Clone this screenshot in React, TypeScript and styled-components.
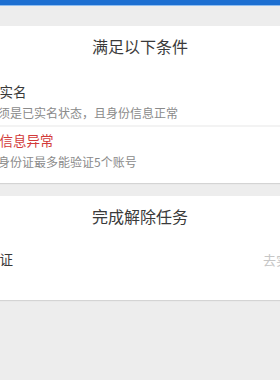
import * as React from "react"
import styled, {createGlobalStyle} from "styled-components"

const GlobalStyle = createGlobalStyle`
    html, body {
        margin: 0;
        padding: 0;
        background: #ededed;
        overflow: hidden;
        font-family: "Noto Sans CJK SC", "Noto Sans", sans-serif;
    }
`

const conditions = [
    {title: "已实名", desc: "必须是已实名状态，且身份信息正常", warn: false},
    {title: "无信息异常", desc: "同身份证最多能验证5个账号", warn: true},
]

export default function App() {
    return (
        <Viewport>
            <GlobalStyle />
            <Page>
                <TopBar />
                <Card>
                    <CardTitle>满足以下条件</CardTitle>
                    <CondRow $top={18} $bottom={5}>
                        <CondTitle>{conditions[0].title}</CondTitle>
                        <CondDesc>{conditions[0].desc}</CondDesc>
                    </CondRow>
                    <Divider />
                    <CondRow $top={6} $bottom={14}>
                        <CondTitle $warn>{conditions[1].title}</CondTitle>
                        <CondDesc>{conditions[1].desc}</CondDesc>
                    </CondRow>
                </Card>
                <Card>
                    <CardTitle>完成解除任务</CardTitle>
                    <TaskRow>
                        <TaskName>验证</TaskName>
                        <TaskAction>去实名</TaskAction>
                    </TaskRow>
                </Card>
            </Page>
        </Viewport>
    )
}

const Viewport = styled("div")`
    width: 280px;
    height: 380px;
    overflow: hidden;
    background: #ededed;
`
const Page = styled("div")`
    width: 340px;
    margin-left: -30px;
    display: flex;
    flex-direction: column;
    gap: 13px;
`
const TopBar = styled("div")`
    height: 5px;
    background: #1d6fd1;
    border-bottom: 1px solid #8fbdef;
    margin-bottom: 7px;
`
const Card = styled("div")`
    background: #fff;
    display: flex;
    flex-direction: column;
    box-shadow: 0 1px 1px rgba(0, 0, 0, 0.1);
`
const CardTitle = styled("div")`
    height: 40px;
    display: flex;
    align-items: center;
    justify-content: center;
    font-size: 16px;
    color: #3a3a3a;
`
const CondRow = styled("div")<{$top: number; $bottom: number}>`
    display: flex;
    flex-direction: column;
    gap: 8px;
    padding: ${p => p.$top}px 16px ${p => p.$bottom}px;
`
const CondTitle = styled("div")<{$warn?: boolean}>`
    font-size: 13.5px;
    line-height: 14px;
    color: ${p => (p.$warn ? "#d23a3a" : "#3a3a3a")};
`
const CondDesc = styled("div")`
    font-size: 12px;
    line-height: 14px;
    color: #8a8a8a;
`
const Divider = styled("div")`
    height: 2px;
    background: #f3f3f3;
`
const TaskRow = styled("div")`
    height: 50px;
    display: flex;
    align-items: center;
    justify-content: space-between;
    padding: 0 8px 16px 16px;
    margin-top: -2px;
`
const TaskName = styled("div")`
    font-size: 13.5px;
    color: #3a3a3a;
`
const TaskAction = styled("div")`
    font-size: 13px;
    color: #c6c6c6;
`
